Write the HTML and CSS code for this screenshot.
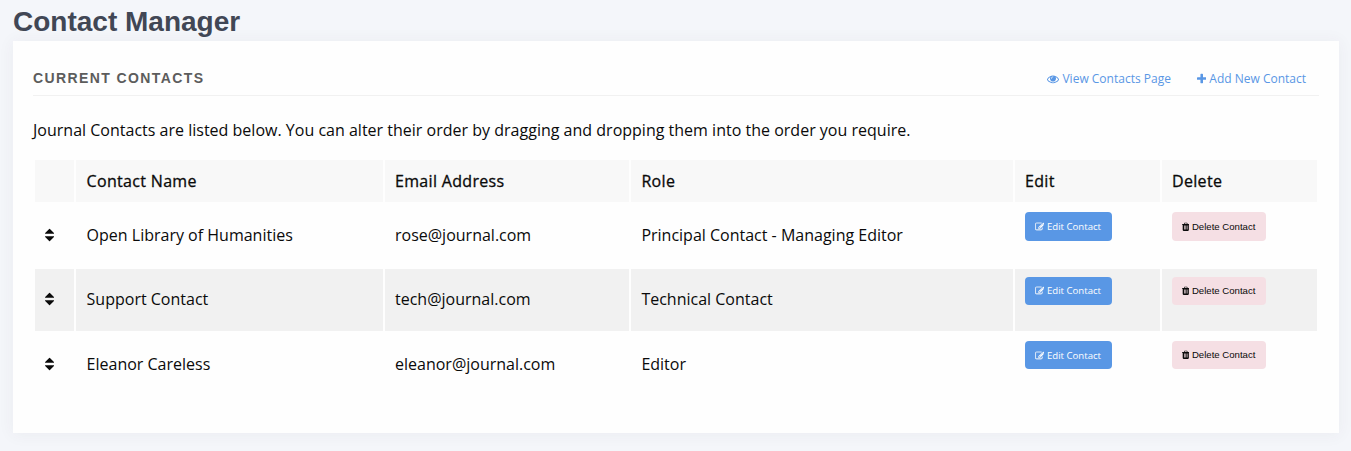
FILE: index.html
```html
<!DOCTYPE html>
<html lang="en">
<head>
<meta charset="utf-8">
<title>Contact Manager</title>
<link rel="stylesheet" href="styles.css">
</head>
<body>
<svg class="sprite" aria-hidden="true">
  <symbol id="eye" viewBox="0 0 1792 1792"><path d="M1664 960q-152-236-381-353 61 104 61 225 0 185-131.5 316.5t-316.5 131.5-316.5-131.5-131.5-316.5q0-121 61-225-229 117-381 353 133 205 333.5 326.5t434.5 121.5 434.5-121.5 333.5-326.5zm-720-384q0-20-14-34t-34-14q-125 0-214.5 89.5t-89.5 214.5q0 20 14 34t34 14 34-14 14-34q0-86 61-147t147-61q20 0 34-14t14-34zm848 384q0 34-20 69-140 230-376.5 368.5t-499.5 138.5-499.5-139-376.5-368q-20-35-20-69t20-69q140-229 376.5-368t499.5-139 499.5 139 376.5 368q20 35 20 69z"/></symbol>
  <symbol id="plus" viewBox="192 0 1408 1792"><path d="M1600 736v192q0 40-28 68t-68 28h-416v416q0 40-28 68t-68 28h-192q-40 0-68-28t-28-68v-416h-416q-40 0-68-28t-28-68v-192q0-40 28-68t68-28h416v-416q0-40 28-68t68-28h192q40 0 68 28t28 68v416h416q40 0 68 28t28 68z"/></symbol>
  <symbol id="sort" viewBox="384 0 1024 1792"><path d="M1408 1088q0 26-19 45l-448 448q-19 19-45 19t-45-19l-448-448q-19-19-19-45t19-45 45-19h896q26 0 45 19t19 45zm0-384q0 26-19 45t-45 19h-896q-26 0-45-19t-19-45 19-45l448-448q19-19 45-19t45 19l448 448q19 19 19 45z"/></symbol>
  <symbol id="edit" viewBox="0 0 1792 1792"><path d="M888 1184l116-116-152-152-116 116v56h96v96h56zm440-720q-16-16-33 1l-350 350q-17 17-1 33t33-1l350-350q17-17 1-33zm80 594v190q0 119-84.5 203.5t-203.5 84.5h-832q-119 0-203.5-84.5t-84.5-203.5v-832q0-119 84.5-203.5t203.5-84.5h832q63 0 117 25 15 7 18 23 3 17-9 29l-49 49q-14 14-32 8-23-6-45-6h-832q-66 0-113 47t-47 113v832q0 66 47 113t113 47h832q66 0 113-47t47-113v-126q0-13 9-22l64-64q15-15 35-7t20 29zm-96-738l288 288-672 672h-288v-288zm444 132l-92 92-288-288 92-92q28-28 68-28t68 28l152 152q28 28 28 68t-28 68z"/></symbol>
  <symbol id="trash" viewBox="192 0 1408 1792"><path d="M704 1376v-704q0-14-9-23t-23-9h-64q-14 0-23 9t-9 23v704q0 14 9 23t23 9h64q14 0 23-9t9-23zm256 0v-704q0-14-9-23t-23-9h-64q-14 0-23 9t-9 23v704q0 14 9 23t23 9h64q14 0 23-9t9-23zm256 0v-704q0-14-9-23t-23-9h-64q-14 0-23 9t-9 23v704q0 14 9 23t23 9h64q14 0 23-9t9-23zm-544-992h448l-48-117q-7-9-17-11h-317q-10 2-17 11zm928 32v64q0 14-9 23t-23 9h-96v948q0 83-47 143.5t-113 60.5h-832q-66 0-113-58.5t-47-141.5v-952h-96q-14 0-23-9t-9-23v-64q0-14 9-23t23-9h309l70-167q15-37 54-63t79-26h320q40 0 79 26t54 63l70 167h309q14 0 23 9t9 23z"/></symbol>
</svg>
<h1 class="page-title">Contact Manager</h1>
<main class="panel">
  <header class="title-area">
    <h2 class="panel-title">Current Contacts</h2>
    <nav class="links">
      <a class="link"><svg class="icon"><use href="#eye"/></svg>View Contacts Page</a>
      <a class="link"><svg class="icon plus"><use href="#plus"/></svg>Add New Contact</a>
    </nav>
  </header>
  <p class="intro">Journal Contacts are listed below. You can alter their order by dragging and dropping them into the order you require.</p>
  <table class="contacts">
    <colgroup><col class="c-sort"><col class="c-name"><col class="c-email"><col class="c-role"><col class="c-edit"><col class="c-delete"></colgroup>
    <thead>
      <tr><th></th><th>Contact Name</th><th>Email Address</th><th>Role</th><th>Edit</th><th>Delete</th></tr>
    </thead>
    <tbody>
      <tr>
        <td><svg class="icon sort"><use href="#sort"/></svg></td><td>Open Library of Humanities</td><td>rose@journal.com</td><td>Principal Contact - Managing Editor</td>
        <td class="action"><a class="button edit"><svg class="icon"><use href="#edit"/></svg>Edit Contact</a></td>
        <td class="action"><button class="button delete"><svg class="icon trash"><use href="#trash"/></svg>Delete Contact</button></td>
      </tr>
      <tr>
        <td><svg class="icon sort"><use href="#sort"/></svg></td><td>Support Contact</td><td>tech@journal.com</td><td>Technical Contact</td>
        <td class="action"><a class="button edit"><svg class="icon"><use href="#edit"/></svg>Edit Contact</a></td>
        <td class="action"><button class="button delete"><svg class="icon trash"><use href="#trash"/></svg>Delete Contact</button></td>
      </tr>
      <tr>
        <td><svg class="icon sort"><use href="#sort"/></svg></td><td>Eleanor Careless</td><td>eleanor@journal.com</td><td>Editor</td>
        <td class="action"><a class="button edit"><svg class="icon"><use href="#edit"/></svg>Edit Contact</a></td>
        <td class="action"><button class="button delete"><svg class="icon trash"><use href="#trash"/></svg>Delete Contact</button></td>
      </tr>
    </tbody>
  </table>
</main>
</body>
</html>
```
FILE: styles.css
```css
* { box-sizing: border-box; }
body {
  margin: 0;
  height: 451px;
  padding: 1px 12px 0 13px;
  background: #f4f6fa;
  color: #0a0a0a;
  font: 16px/24px "Open Sans", sans-serif;
}
.sprite { display: none; }
.icon { width: 1em; height: 1em; fill: currentColor; flex: none; }
.page-title {
  margin: 0;
  height: 40px;
  font: bold 28px/42px "Liberation Sans", sans-serif;
  color: #414755;
}
.panel {
  height: 392px;
  padding: 20px;
  background: #fefefe;
  box-shadow: 0 1px 15px 1px rgba(69, 65, 78, 0.05);
}
.title-area {
  display: flex;
  justify-content: space-between;
  height: 35px;
  padding-right: 13px;
  border-bottom: 1px solid #f1f1f1;
}
.panel-title {
  margin: 0;
  font: bold 14px/35px "Liberation Sans", sans-serif;
  letter-spacing: 1.4px;
  text-transform: uppercase;
  color: #5c5c5c;
}
.links { display: flex; gap: 26px; }
.link {
  display: flex;
  align-items: center;
  gap: 3px;
  font-size: 12px;
  line-height: 35px;
  color: #5997e5;
}
.link .icon { margin-top: 1px; }
.plus { width: 9.43px; }
.intro { margin: 22px 0 16px; line-height: 25.6px; letter-spacing: 0.008px; }
.contacts {
  width: 1286px;
  table-layout: fixed;
  border-collapse: separate;
  border-spacing: 2px;
  margin-top: -1.4px;
}
.c-sort { width: 39px; }
.c-name { width: 307px; }
.c-email { width: 244px; }
.c-role { width: 382px; }
.c-edit { width: 145px; }
.c-delete { width: 155px; }
th, td { padding: 0 10px; text-align: left; }
th:nth-child(2), td:nth-child(2) { padding-left: 10.6px; }
th:nth-child(4), td:nth-child(4) { padding-left: 10.4px; }
th {
  height: 42px;
  background: #f8f8f8;
  font-weight: 500;
  letter-spacing: 0.32px;
  -webkit-text-stroke: 0.3px currentColor;
}
td { height: 62.4px; padding-bottom: 0.8px; }
tbody tr:nth-child(even) td { background: #f1f1f1; }
.sort { display: block; width: 9.14px; height: 16px; }
.action { padding-top: 8px; vertical-align: top; }
.button {
  display: flex;
  align-items: center;
  gap: 2.5px;
  width: max-content;
  height: 28.4px;
  padding: 0 10.4px 0 9.9px;
  border: 0;
  border-radius: 4px;
  font-size: 9.6px;
  line-height: 1;
}
.edit { padding-top: 0.3px; padding-right: 11.2px; background: #5997e5; color: #fefefe; }
.edit .icon { stroke: currentColor; stroke-width: 40px; }
.delete { background: #f5dfe4; color: #0a0a0a; font-family: "Liberation Sans", sans-serif; }
.trash { width: 0.786em; }
```
